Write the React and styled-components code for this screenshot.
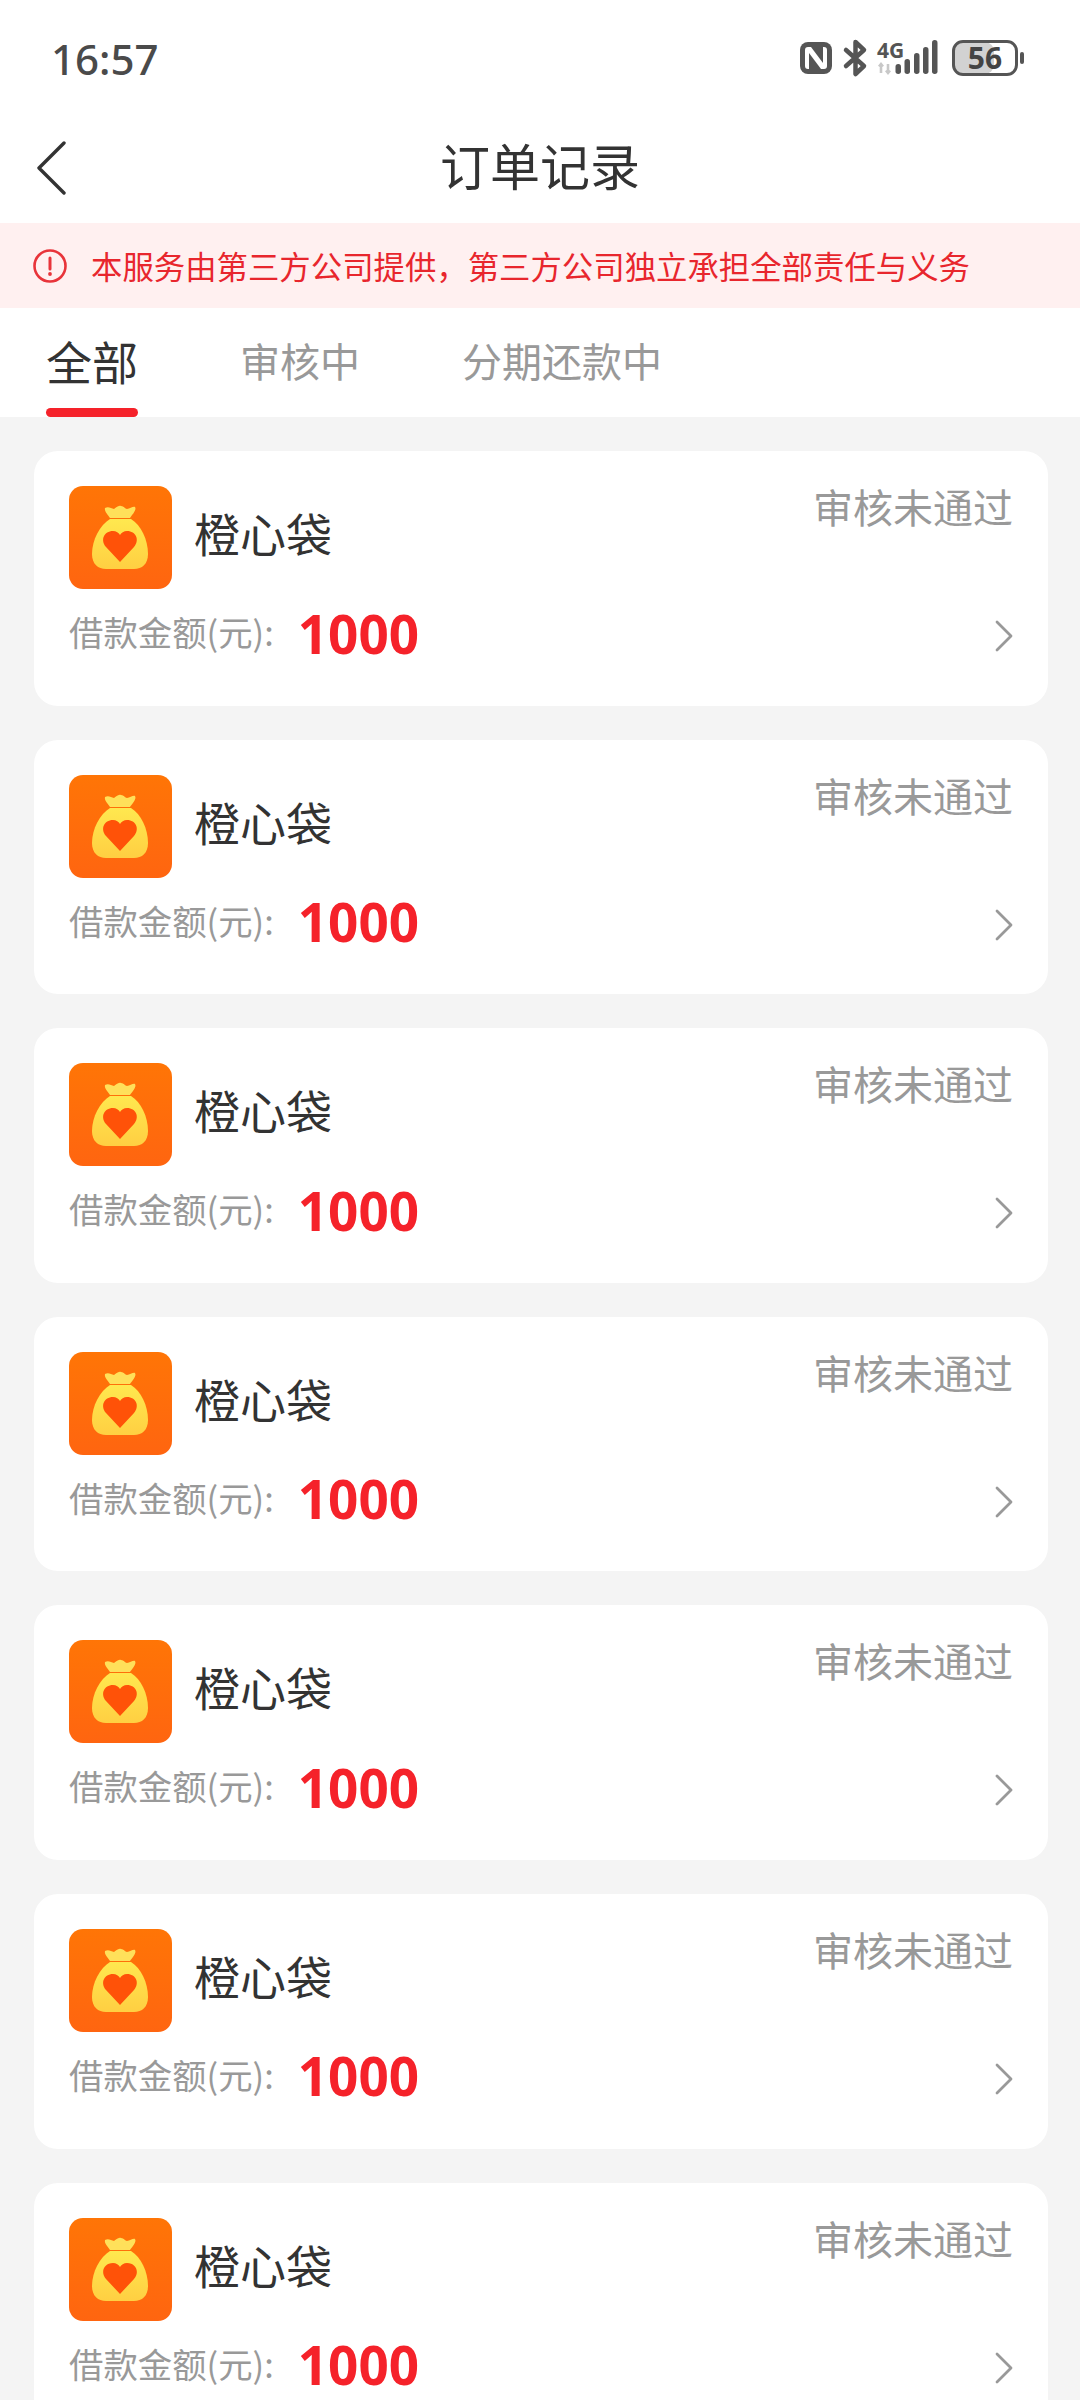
import React from 'react';
import styled, { createGlobalStyle } from 'styled-components';

const GlobalStyle = createGlobalStyle`
  html, body {
    margin: 0;
    padding: 0;
    background: #f4f4f4;
  }
  body {
    font-family: "Noto Sans", "Noto Sans CJK SC", sans-serif;
  }
`;

const Page = styled.div`
  width: 1080px;
  height: 2400px;
  overflow: hidden;
  background: #f4f4f4;
`;

const TopArea = styled.header`
  background: #fff;
`;

const StatusBar = styled.div`
  height: 116px;
  padding: 0 56px 0 51px;
  box-sizing: border-box;
  display: flex;
  align-items: center;
  justify-content: space-between;
`;

const Clock = styled.span`
  font-family: "Noto Sans", sans-serif;
  font-size: 42px;
  font-weight: 500;
  color: #4a4a4a;
`;

const StatusIcons = styled.div`
  display: flex;
  align-items: center;
  svg {
    overflow: visible;
  }
`;

const NavBar = styled.div`
  height: 107px;
  padding-bottom: 12px;
  box-sizing: border-box;
  position: relative;
  display: flex;
  align-items: center;
  justify-content: center;
`;

const BackButton = styled.svg`
  position: absolute;
  left: 36px;
  top: 25px;
`;

const Title = styled.h1`
  margin: 0;
  font-family: "Noto Sans CJK SC", sans-serif;
  font-size: 50px;
  line-height: 60px;
  font-weight: 400;
  color: #333;
`;

const Notice = styled.div`
  height: 85px;
  padding-left: 33px;
  display: flex;
  align-items: center;
  gap: 24px;
  background: #fff0f0;
`;

const NoticeText = styled.span`
  font-family: "Noto Sans CJK SC", sans-serif;
  font-size: 31.4px;
  color: #e8262d;
  white-space: nowrap;
`;

const Tabs = styled.nav`
  height: 109px;
  padding-left: 46px;
  display: flex;
  align-items: stretch;
  gap: 102px;
`;

const Tab = styled.div`
  position: relative;
  display: flex;
  align-items: center;
  padding-bottom: 6px;
  box-sizing: border-box;
  font-family: "Noto Sans CJK SC", sans-serif;
  font-size: ${(p) => (p.$active ? '46px' : '40px')};
  color: ${(p) => (p.$active ? '#333' : '#999')};

  ${(p) =>
    p.$active &&
    `
    &::after {
      content: '';
      position: absolute;
      left: 0;
      right: 0;
      bottom: 0;
      height: 9px;
      border-radius: 5px;
      background: #f5222a;
    }
  `}
`;

const OrderList = styled.main`
  padding: 34px 32px 0 34px;
  display: flex;
  flex-direction: column;
  gap: 34px;
`;

const Card = styled.article`
  height: 254.6px;
  flex-shrink: 0;
  padding: 35px 35px;
  box-sizing: border-box;
  background: #fff;
  border-radius: 24px;
`;

const CardTop = styled.div`
  display: flex;
  align-items: flex-start;
`;

const Brand = styled.svg`
  flex-shrink: 0;
  display: block;
`;

const Name = styled.span`
  margin: 21px 0 0 22px;
  flex: 1;
  font-family: "Noto Sans CJK SC", sans-serif;
  font-size: 46px;
  line-height: 50px;
  color: #333;
`;

const Status = styled.span`
  margin-top: -2px;
  font-family: "Noto Sans CJK SC", sans-serif;
  font-size: 40px;
  line-height: 44px;
  color: #999;
`;

const CardBottom = styled.div`
  margin-top: 12px;
  height: 60px;
  display: flex;
  align-items: center;
`;

const Label = styled.span`
  font-family: "Noto Sans CJK SC", sans-serif;
  font-size: 34.4px;
  line-height: 44px;
  color: #999;
`;

const Amount = styled.span`
  margin-left: 24px;
  padding-top: 5px;
  flex: 1;
  font-family: "Noto Sans", sans-serif;
  font-size: 53px;
  line-height: 56px;
  font-weight: 700;
  color: #f5222a;
`;

const Chevron = styled.svg`
  margin-top: 10px;
`;

function BatteryIcon() {
  return (
    <svg width="72" height="36" viewBox="0 0 72 36" style={{ marginLeft: 13 }}>
      <rect x="2" y="2" width="40" height="32" rx="9" fill="#d2d2d2" />
      <rect x="1.5" y="1.5" width="63" height="33" rx="9.5" fill="none" stroke="#555" strokeWidth="3" />
      <rect x="68" y="12" width="4" height="12" rx="2" fill="#555" />
      <text x="33" y="29" textAnchor="middle" fontFamily="Noto Sans" fontWeight="700" fontSize="30" fill="#444">56</text>
    </svg>
  );
}

function SignalIcon() {
  return (
    <svg width="62" height="36" viewBox="0 0 62 36" style={{ marginLeft: 10 }}>
      <text x="0" y="18" fontFamily="Noto Sans" fontWeight="700" fontSize="21" fill="#555">4G</text>
      <path d="M4 33v-9M2 26.500l2-2.500 2 2.500M11 24v9M9 30.500l2 2.500 2-2.500" stroke="#c8c8c8" strokeWidth="2.6" fill="none" />
      <g fill="#555">
        <rect x="18.500" y="24" width="5.500" height="10" rx="2.700" />
        <rect x="27.500" y="19" width="5.500" height="15" rx="2.700" />
        <rect x="37" y="13" width="5.500" height="21" rx="2.700" />
        <rect x="46" y="7" width="5.500" height="27" rx="2.700" />
        <rect x="55" y="0" width="5.500" height="34" rx="2.700" />
      </g>
    </svg>
  );
}

function StatusGlyphs() {
  return (
    <StatusIcons>
      {/* NFC badge */}
      <svg width="32" height="32" viewBox="0 0 32 32">
        <rect width="32" height="32" rx="8" fill="#555" />
        <path d="M9 5h-1a3 3 0 0 0-3 3v16a3 3 0 0 0 3 3h1V11l12 16h3a3 3 0 0 0 3-3V8a3 3 0 0 0-3-3h-1v16L11 5z" fill="#fff" />
      </svg>
      {/* bluetooth */}
      <svg width="24" height="36" viewBox="0 0 24 36" style={{ marginLeft: 11 }}>
        <path d="M3 10l18 16-8.500 8V2L21 10 3 26" fill="none" stroke="#555" strokeWidth="4.500" strokeLinejoin="round" strokeLinecap="round" />
      </svg>
      <SignalIcon />
      <BatteryIcon />
    </StatusIcons>
  );
}

function BagLogo() {
  return (
    <Brand width="103" height="103" viewBox="0 0 103 103">
      <defs>
        <linearGradient id="tile" x1="0" y1="0" x2="0" y2="1">
          <stop offset="0" stopColor="#ff7506" />
          <stop offset="1" stopColor="#ff6510" />
        </linearGradient>
        <linearGradient id="sack" x1="0" y1="0" x2="0" y2="1">
          <stop offset="0" stopColor="#ffe84f" />
          <stop offset="1" stopColor="#ffcf42" />
        </linearGradient>
      </defs>
      <rect width="103" height="103" rx="14" fill="url(#tile)" />
      <path d="M36 22c3-2 6 0 9 1 2-1 4-4 7-3 3 0 4 3 6 3 3 0 6-3 8-2 2 3-3 8-5 11H41c-2-3-6-7-5-10z" fill="#ffe05a" />
      <path d="M41 33h21c10 6 17 21 17 35 0 10-6 15-14 15H37c-8 0-14-5-14-15 0-14 8-29 18-35z" fill="url(#sack)" />
      <path d="M51 76L37 61c-6-7-2-16 7-16 3 0 6 2 7 4 1-2 4-4 7-4 9 0 13 9 7 16z" fill="#ff5208" />
    </Brand>
  );
}

function OrderCard() {
  return (
    <Card>
      <CardTop>
        <BagLogo />
        <Name>橙心袋</Name>
        <Status>审核未通过</Status>
      </CardTop>
      <CardBottom>
        <Label>借款金额(元):</Label>
        <Amount>1000</Amount>
        <Chevron width="19" height="34" viewBox="0 0 19 34">
          <path d="M3 3l14 14L3 31" fill="none" stroke="#999" strokeWidth="2.800" strokeLinecap="round" strokeLinejoin="round" />
        </Chevron>
      </CardBottom>
    </Card>
  );
}

const orders = [1, 2, 3, 4, 5, 6, 7];

export default function App() {
  return (
    <Page>
      <GlobalStyle />
      <TopArea>
        <StatusBar>
          <Clock>16:57</Clock>
          <StatusGlyphs />
        </StatusBar>
        <NavBar>
          <BackButton width="30" height="54" viewBox="0 0 30 54">
            <path d="M28 2L3 27l25 25" fill="none" stroke="#333" strokeWidth="3.400" strokeLinecap="round" strokeLinejoin="round" />
          </BackButton>
          <Title>订单记录</Title>
        </NavBar>
        <Notice>
          <svg width="34" height="34" viewBox="0 0 34 34">
            <circle cx="17" cy="17" r="15.500" fill="none" stroke="#e8343a" strokeWidth="2.600" />
            <path d="M17 9v11" stroke="#e8343a" strokeWidth="3" strokeLinecap="round" />
            <circle cx="17" cy="25" r="1.900" fill="#e8343a" />
          </svg>
          <NoticeText>本服务由第三方公司提供&#xFF0C;第三方公司独立承担全部责任与义务</NoticeText>
        </Notice>
        <Tabs>
          <Tab $active>全部</Tab>
          <Tab>审核中</Tab>
          <Tab>分期还款中</Tab>
        </Tabs>
      </TopArea>
      <OrderList>
        {orders.map((id) => (
          <OrderCard key={id} />
        ))}
      </OrderList>
    </Page>
  );
}
